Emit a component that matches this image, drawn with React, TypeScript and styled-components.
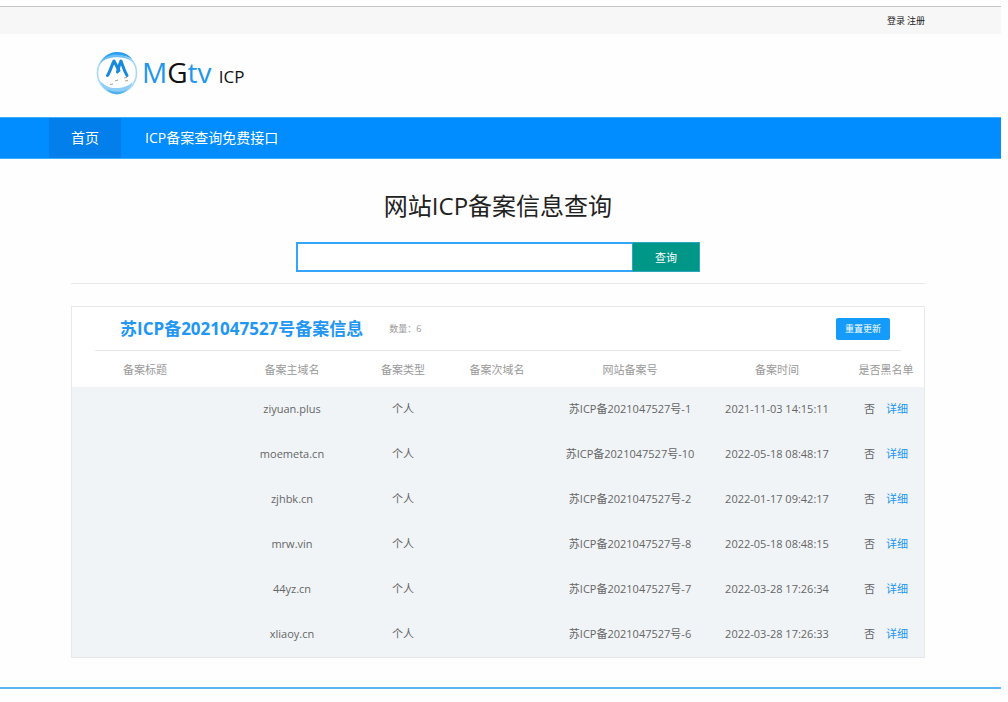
import React from "react";
import styled, { createGlobalStyle } from "styled-components";

const GlobalStyle = createGlobalStyle`
  *, *::before, *::after { box-sizing: border-box; }
  body {
    margin: 0;
    background: #fefefe;
    color: #333;
    font-family: "Open Sans", "Noto Sans CJK SC", sans-serif;
    font-size: 11px;
  }
  a { color: inherit; text-decoration: none; }
`;

const Page = styled.div`
  padding: 6px 7px 14px 0;
`;

const TopBar = styled.div`
  display: flex;
  justify-content: flex-end;
  align-items: center;
  gap: 2px;
  height: 28px;
  padding-right: 76px;
  background: #f7f7f7;
  border-top: 1px solid #c4c4c4;
  font-size: 9px;
  line-height: 12px;
  color: #222;
`;

const Header = styled.header`
  display: flex;
  align-items: center;
  height: 83px;
  padding: 0 96px 5px;
`;

const Brand = styled.a`
  display: flex;
  align-items: center;
  gap: 4px;
`;

const BrandText = styled.span`
  padding-top: 2px;
  font-size: 28px;
  line-height: 32px;
  color: #2196ee;
`;

const BrandDark = styled.span<{ $small?: boolean }>`
  color: #111;
  font-size: ${(p) => (p.$small ? "17px" : "28px")};
`;

const Nav = styled.nav`
  display: flex;
  height: 42px;
  padding-left: 49px;
  background: #018cff;
  border: solid #3aaeff;
  border-width: 1px 0;
`;

const NavLink = styled.a<{ $active?: boolean }>`
  display: flex;
  align-items: center;
  padding: 0 ${(p) => (p.$active ? 22 : 24)}px;
  background: ${(p) => (p.$active ? "#027fea" : "transparent")};
  color: #fff;
  font-size: 14px;
  line-height: 20px;
`;

const Main = styled.main`
  padding: 29px 76px 0 71px;
`;

const Title = styled.h1`
  margin: 0 0 18px;
  text-align: center;
  font-size: 24px;
  line-height: 36px;
  font-weight: 400;
  color: #222;
`;

const SearchForm = styled.form`
  display: flex;
  max-width: 404px;
  height: 30px;
  margin: 0 auto;
`;

const SearchInput = styled.input`
  flex: 1;
  min-width: 0;
  padding: 0 8px;
  border: 2px solid #35a5fb;
  border-right: 0;
  background: #fff;
  font: inherit;
  outline: none;
`;

const SearchButton = styled.button`
  width: 68px;
  padding: 0;
  border: 1px solid #2ba7bd;
  background: #009688;
  color: #fff;
  font: inherit;
`;

const Divider = styled.hr`
  height: 1px;
  margin: 11px 0 22px;
  border: 0;
  background: #e8e8e8;
`;

const Card = styled.section`
  border: 1px solid #e6e8ea;
  background: #fff;
`;

const CardHead = styled.div`
  display: flex;
  align-items: center;
  height: 44px;
  margin: 0 23px;
  padding: 0 11px 0 25px;
  border-bottom: 1px solid #e4e4e4;
`;

const CardTitle = styled.h2`
  margin: 0 26px 0 0;
  font-size: 17px;
  line-height: 24px;
  font-weight: 700;
  color: #2196f3;
`;

const Count = styled.span`
  flex: 1;
  font-size: 9px;
  color: #999;
`;

const RefreshButton = styled.button`
  width: 54px;
  height: 22px;
  padding: 0;
  border: 0;
  border-radius: 2px;
  background: #159cfb;
  color: #fff;
  font: inherit;
  font-size: 9px;
`;

const Records = styled.table`
  width: 100%;
  table-layout: fixed;
  border-collapse: collapse;
  text-align: center;
  line-height: 16px;
`;

const HeadCell = styled.th`
  height: 36px;
  padding: 2px 0 0;
  font-weight: 400;
  color: #999;
  white-space: nowrap;
`;

const Cell = styled.td`
  height: 45px;
  padding: 0 0 1px;
  background: #f0f4f6;
  color: #666;
  white-space: nowrap;
`;

const DetailLink = styled.a`
  margin-left: 11px;
  color: #2196f3;
`;

const Footer = styled.footer`
  height: 2px;
  margin-top: 29px;
  background: #5bb4f3;
`;

const columns = [
  { label: "备案标题", width: 146 },
  { label: "备案主域名", width: 148 },
  { label: "备案类型", width: 74 },
  { label: "备案次域名", width: 114 },
  { label: "网站备案号", width: 152 },
  { label: "备案时间", width: 142 },
  { label: "是否黑名单", width: 76 },
];

const records = [
  { domain: "ziyuan.plus", no: 1, time: "2021-11-03 14:15:11" },
  { domain: "moemeta.cn", no: 10, time: "2022-05-18 08:48:17" },
  { domain: "zjhbk.cn", no: 2, time: "2022-01-17 09:42:17" },
  { domain: "mrw.vin", no: 8, time: "2022-05-18 08:48:15" },
  { domain: "44yz.cn", no: 7, time: "2022-03-28 17:26:34" },
  { domain: "xliaoy.cn", no: 6, time: "2022-03-28 17:26:33" },
];

function Logo() {
  return (
    <svg width="42" height="44" viewBox="0 0 42 44" fill="none" aria-hidden="true">
      <ellipse cx="21" cy="22" rx="19.5" ry="20" stroke="#a9d8f9" strokeWidth="1.6" />
      <path d="M5 11C9 3 16 .8 22 1c6 .2 11 3 14 7-5-3-9-3.600-14-3.500C15 4.700 9 6.500 5 11Z" fill="#2f9fef" />
      <path d="M3.500 13C7 6 14 3.500 21 3.800c7 .2 12 2.600 16 7.200-5-3.500-10-4.800-16-4.800-7 0-13 2-17.500 6.800Z" fill="#6dbef6" />
      <path d="M4 30c6 6 11 7.500 18 7 6-.4 11-2 15-6-3 8-9 12-16 12.200C13 43.400 7 38.500 4 30Z" fill="#8dcdf8" />
      <path d="M11 38c5 3.500 15 3.800 20 .2-4 4.500-8 5.200-11 5-4-.2-7-2-9-5.200Z" fill="#4fb0f3" />
      <path d="M11.500 24.500C14 21 15.500 14.500 18 10l5 9.500" stroke="#1889dc" strokeWidth="3" strokeLinejoin="round" strokeLinecap="round" />
      <path d="M21.500 21C22.500 17 23.500 13 25 10c1.800 5 3 9.500 6 14.500" stroke="#1889dc" strokeWidth="3" strokeLinejoin="round" strokeLinecap="round" />
      <path d="m19 30 3-1m6-2 3-.5m-17 7 3-.5m12-3 3-.5" stroke="#aaa08a" strokeWidth="1" />
    </svg>
  );
}

export default function App() {
  return (
    <>
      <GlobalStyle />
      <Page>
        <TopBar>
          <a href="#login">登录</a>
          <a href="#register">注册</a>
        </TopBar>
        <Header>
          <Brand href="#home">
            <Logo />
            <BrandText>
              M<BrandDark>G</BrandDark>tv <BrandDark $small>ICP</BrandDark>
            </BrandText>
          </Brand>
        </Header>
        <Nav>
          <NavLink href="#home" $active>首页</NavLink>
          <NavLink href="#api">ICP备案查询免费接口</NavLink>
        </Nav>
        <Main>
          <Title>网站ICP备案信息查询</Title>
          <SearchForm onSubmit={(e) => e.preventDefault()}>
            <SearchInput type="text" aria-label="网站ICP备案信息查询" />
            <SearchButton type="submit">查询</SearchButton>
          </SearchForm>
          <Divider />
          <Card>
            <CardHead>
              <CardTitle>苏ICP备2021047527号备案信息</CardTitle>
              <Count>数量：6</Count>
              <RefreshButton type="button">重置更新</RefreshButton>
            </CardHead>
            <Records>
              <colgroup>
                {columns.map((c) => (
                  <col key={c.label} width={c.width} />
                ))}
              </colgroup>
              <thead>
                <tr>
                  {columns.map((c) => (
                    <HeadCell key={c.label} scope="col">{c.label}</HeadCell>
                  ))}
                </tr>
              </thead>
              <tbody>
                {records.map((r) => (
                  <tr key={r.no}>
                    <Cell />
                    <Cell>{r.domain}</Cell>
                    <Cell>个人</Cell>
                    <Cell />
                    <Cell>苏ICP备2021047527号-{r.no}</Cell>
                    <Cell>{r.time}</Cell>
                    <Cell>
                      否<DetailLink href={`#detail-${r.no}`}>详细</DetailLink>
                    </Cell>
                  </tr>
                ))}
              </tbody>
            </Records>
          </Card>
        </Main>
        <Footer />
      </Page>
    </>
  );
}
